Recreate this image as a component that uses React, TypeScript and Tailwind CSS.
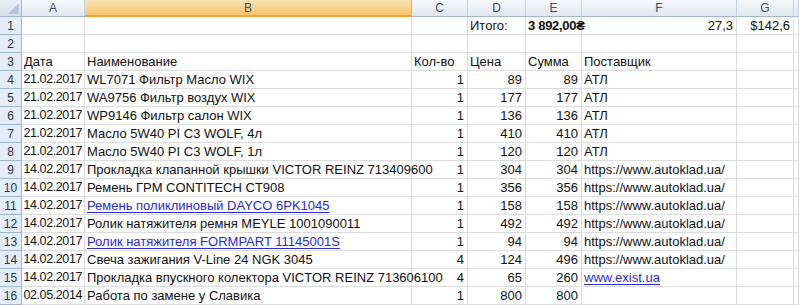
import React from 'react';

type Row = {
  n: number;
  date?: string;
  name?: string;
  qty?: string;
  price?: string;
  sum?: string;
  supplier?: string;
  nameLink?: boolean;
  supLink?: boolean;
};

const rows: Row[] = [
  { n: 4, date: '21.02.2017', name: 'WL7071 Фильтр Масло WIX', qty: '1', price: '89', sum: '89', supplier: 'АТЛ' },
  { n: 5, date: '21.02.2017', name: 'WA9756 Фильтр воздух WIX', qty: '1', price: '177', sum: '177', supplier: 'АТЛ' },
  { n: 6, date: '21.02.2017', name: 'WP9146 Фильтр салон WIX', qty: '1', price: '136', sum: '136', supplier: 'АТЛ' },
  { n: 7, date: '21.02.2017', name: 'Масло 5W40 PI C3 WOLF, 4л', qty: '1', price: '410', sum: '410', supplier: 'АТЛ' },
  { n: 8, date: '21.02.2017', name: 'Масло 5W40 PI C3 WOLF, 1л', qty: '1', price: '120', sum: '120', supplier: 'АТЛ' },
  { n: 9, date: '14.02.2017', name: 'Прокладка клапанной крышки VICTOR REINZ 713409600', qty: '1', price: '304', sum: '304', supplier: 'https://www.autoklad.ua/' },
  { n: 10, date: '14.02.2017', name: 'Ремень ГРМ CONTITECH CT908', qty: '1', price: '356', sum: '356', supplier: 'https://www.autoklad.ua/' },
  { n: 11, date: '14.02.2017', name: 'Ремень поликлиновый DAYCO 6PK1045', qty: '1', price: '158', sum: '158', supplier: 'https://www.autoklad.ua/', nameLink: true },
  { n: 12, date: '14.02.2017', name: 'Ролик натяжителя ремня MEYLE 1001090011', qty: '1', price: '492', sum: '492', supplier: 'https://www.autoklad.ua/' },
  { n: 13, date: '14.02.2017', name: 'Ролик натяжителя FORMPART 11145001S', qty: '1', price: '94', sum: '94', supplier: 'https://www.autoklad.ua/', nameLink: true },
  { n: 14, date: '14.02.2017', name: 'Свеча зажигания V-Line 24 NGK 3045', qty: '4', price: '124', sum: '496', supplier: 'https://www.autoklad.ua/' },
  { n: 15, date: '14.02.2017', name: 'Прокладка впускного колектора VICTOR REINZ 713606100', qty: '4', price: '65', sum: '260', supplier: 'www.exist.ua', supLink: true },
  { n: 16, date: '02.05.2014', name: 'Работа по замене у Славика', qty: '1', price: '800', sum: '800' },
];

const cell = 'h-[18px] shrink-0 border-r border-b border-[#dadcdd] flex items-center whitespace-nowrap overflow-visible';
const link = 'text-[#2b2bd6] underline underline-offset-2';

function RowHead({ n }: { n: number | string }) {
  return (
    <div className="w-[22px] h-[18px] shrink-0 bg-[#e4ecf7] border-r border-b border-[#9eb6ce] flex items-center justify-center text-[12px] text-[#2a3446]">
      {n}
    </div>
  );
}

export default function App() {
  return (
    <div className="w-[799px] h-[305px] overflow-hidden bg-white text-[13px] text-[#111]" style={{ fontFamily: '"Liberation Sans", Arial, sans-serif' }}>
      {/* Column headers */}
      <div className="flex h-[17px]">
        <div className="relative w-[22px] shrink-0 bg-gradient-to-b from-[#e9eff7] to-[#d6e0ee] border-r border-b border-[#9eb6ce]">
          <div className="absolute right-[2px] bottom-[2px] w-0 h-0 border-l-[11px] border-l-transparent border-b-[11px] border-b-[#b7c8de]" />
        </div>
        {[
          ['A', 'w-[63px]'],
          ['B', 'w-[327px]'],
          ['C', 'w-[56px]'],
          ['D', 'w-[58px]'],
          ['E', 'w-[56px]'],
          ['F', 'w-[155px]'],
          ['G', 'w-[57px]'],
          ['', 'w-[5px]'],
        ].map(([l, w]) =>
          l === 'B' ? (
            <div key={l} className={`${w} shrink-0 flex items-center justify-center text-[12px] text-[#3f4b5e] bg-gradient-to-b from-[#fae2b4] to-[#f4c46a] border-r border-b-2 border-r-[#e2b262] border-b-[#f2a33a]`}>
              {l}
            </div>
          ) : (
            <div key={l || 'h'} className={`${w} shrink-0 flex items-center justify-center text-[12px] text-[#3f4b5e] bg-gradient-to-b from-[#f7f9fc] to-[#dfe6ef] border-r border-b border-r-[#c5d2e1] border-b-[#9eb6ce]`}>
              {l}
            </div>
          )
        )}
      </div>

      {/* Row 1 */}
      <div className="flex">
        <RowHead n={1} />
        <div className={`${cell} w-[63px]`} />
        <div className={`${cell} w-[327px]`} />
        <div className={`${cell} w-[56px]`} />
        <div className={`${cell} w-[58px] pl-[2px]`}>Итого:</div>
        <div className={`${cell} w-[56px] pl-[2px] font-bold tracking-[-0.3px]`}>3 892,00₴</div>
        <div className={`${cell} w-[155px] justify-end pr-[3px]`}>27,3</div>
        <div className={`${cell} w-[57px] justify-end pr-[3px]`}>$142,6</div>
        <div className={`${cell} w-[5px]`} />
      </div>

      {/* Row 2 */}
      <div className="flex">
        <RowHead n={2} />
        <div className={`${cell} w-[63px]`} />
        <div className={`${cell} w-[327px]`} />
        <div className={`${cell} w-[56px]`} />
        <div className={`${cell} w-[58px]`} />
        <div className={`${cell} w-[56px]`} />
        <div className={`${cell} w-[155px]`} />
        <div className={`${cell} w-[57px]`} />
        <div className={`${cell} w-[5px]`} />
      </div>

      {/* Row 3 */}
      <div className="flex">
        <RowHead n={3} />
        <div className={`${cell} w-[63px] pl-[2px]`}>Дата</div>
        <div className={`${cell} w-[327px] pl-[2px]`}>Наименование</div>
        <div className={`${cell} w-[56px] pl-[2px]`}>Кол-во</div>
        <div className={`${cell} w-[58px] pl-[2px]`}>Цена</div>
        <div className={`${cell} w-[56px] pl-[2px]`}>Сумма</div>
        <div className={`${cell} w-[155px] pl-[2px]`}>Поставщик</div>
        <div className={`${cell} w-[57px]`} />
        <div className={`${cell} w-[5px]`} />
      </div>

      {rows.map((r) => (
        <div key={r.n} className="flex">
          <RowHead n={r.n} />
          <div className={`${cell} w-[63px] justify-end pr-[2px] text-[12.5px] tracking-[-0.4px]`}>{r.date}</div>
          <div className={`${cell} w-[327px] pl-[2px]`}>
            <span className={r.nameLink ? link : ''}>{r.name}</span>
          </div>
          <div className={`${cell} w-[56px] justify-end pr-[3px]`}>{r.qty}</div>
          <div className={`${cell} w-[58px] justify-end pr-[3px]`}>{r.price}</div>
          <div className={`${cell} w-[56px] justify-end pr-[3px]`}>{r.sum}</div>
          <div className={`${cell} w-[155px] pl-[2px]`}>
            <span className={r.supLink ? link : ''}>{r.supplier}</span>
          </div>
          <div className={`${cell} w-[57px]`} />
          <div className={`${cell} w-[5px]`} />
        </div>
      ))}
    </div>
  );
}
